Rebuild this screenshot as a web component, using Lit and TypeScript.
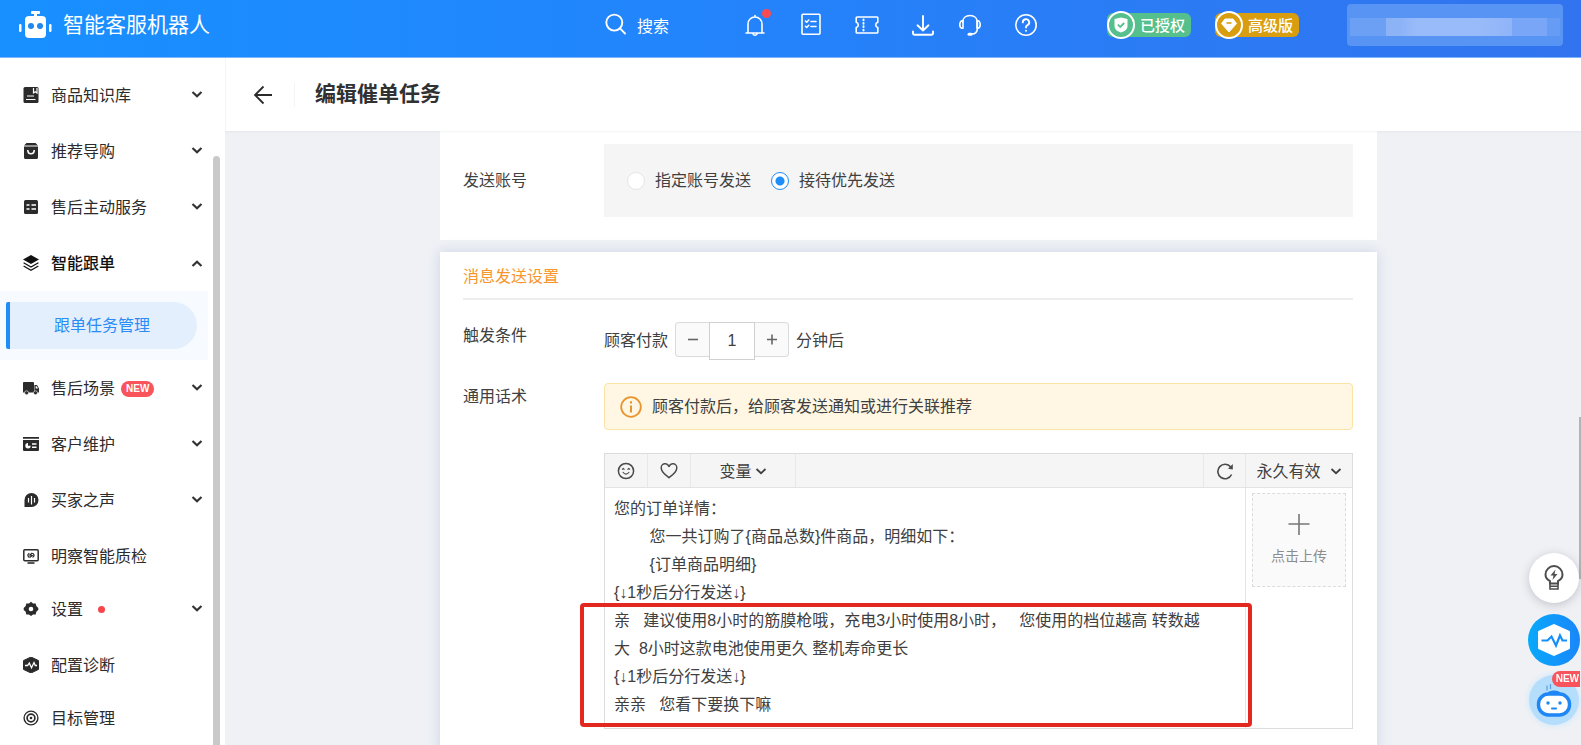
import { LitElement, html, css, svg, nothing } from "lit";
import { customElement } from "lit/decorators.js";
import { classMap } from "lit/directives/class-map.js";

const chevronDown = html`<svg class="chevron" viewBox="0 0 12 12" width="12" height="12" aria-hidden="true"><path d="M1.5 3 6 7.2 10.5 3" fill="none" stroke="currentColor" /></svg>`;
const chevronUp = html`<svg class="chevron" viewBox="0 0 12 12" width="12" height="12" aria-hidden="true"><path d="M1.5 9 6 4.8 10.5 9" fill="none" stroke="currentColor" /></svg>`;

/* Sidebar glyphs, all on a 16 x 16 grid. */
const menuIcons: Record<string, unknown> = {
  book: svg`<path d="M2 0h12q1.500 0 1.500 1.500v13q0 1.500-1.500 1.500H2q-1.500 0-1.500-1.500v-13Q.5 0 2 0z" fill="currentColor"/><path d="M10.500 1v5l1.800-1.200L14 6V1M4 9h7M3 12.500h9.500" fill="none" stroke="#fff" stroke-width="1.200"/>`,
  bag: svg`<path d="M1 3.500h14v11q0 1.500-1.500 1.500h-11Q1 16 1 14.500zM3.500 0h9L15 2.500H1z" fill="currentColor"/><path d="M4.800 7c0 5 6.400 5 6.400 0" fill="none" stroke="#fff" stroke-width="1.600"/>`,
  list: svg`<rect x="1" y="1" width="14" height="14" rx="1.500" fill="currentColor"/><path d="M3.500 6h3M8.500 6H13M3.500 10h3M8.500 10H13" stroke="#fff" stroke-width="1.400"/>`,
  layers: svg`<path d="M8 0l8 4.500L8 9 0 4.500z" fill="currentColor"/><path d="M.6 7.800 8 12l7.400-4.200M.6 11 8 15.200 15.400 11" fill="none" stroke="currentColor" stroke-width="1.300"/>`,
  truck: svg`<path d="M1 2h9q1 0 1 1v9.500H0V3q0-1 1-1zM11.400 5H14l2 3.500v4h-4.600z" fill="currentColor"/><path d="M12.600 6.200h1.200l1.200 2.300h-2.400z" fill="#fff"/><circle cx="3.600" cy="12.800" r="2" fill="currentColor" stroke="#fff" stroke-width=".6"/><circle cx="12.500" cy="12.800" r="2" fill="currentColor" stroke="#fff" stroke-width=".6"/>`,
  card: svg`<path d="M0 1h16v1.800H0zM0 4h16v10q0 1-1 1H1q-1 0-1-1z" fill="currentColor"/><path d="M5 7a2.700 2.700 0 1 0 2.700 2.700H5z" fill="#fff"/><path d="M9 8h4.500M9 11.200h4.500" stroke="#fff" stroke-width="1.400"/>`,
  voice: svg`<path d="M8.500 1a7 7 0 1 1 0 14H1.500V8a7 7 0 0 1 7-7z" fill="currentColor"/><path d="M5.500 6v4.500M8.500 4v8.500M11.500 6v4.500" stroke="#fff" stroke-width="1.200"/>`,
  monitor: svg`<rect x=".8" y="1.800" width="14.400" height="11" rx="1" fill="none" stroke="currentColor" stroke-width="1.500"/><path d="M4.500 15h7" stroke="currentColor" stroke-width="1.600"/><path d="M6.300 5.200Q3.300 7.200 6.300 9.400M9.600 5.200q3 2 0 4.200M9.300 5 6.800 7l2.400.6L6.600 9.600" fill="none" stroke="currentColor" stroke-width="1.200"/>`,
  gear: svg`<path d="M8 .8l2 1.700 2.700-.1.600 2.500L15.300 7v2l-2 1.800-.6 2.700-2.700-.1-2 1.700-2-1.700-2.700.1-.6-2.700L.7 9V7l2-2.100.6-2.500 2.700.1z" fill="currentColor"/><circle cx="8" cy="8" r="2.300" fill="#fff"/>`,
  pulse: svg`<path d="M8 0l7.500 3.600v8.800L8 16 .5 12.400V3.600z" fill="currentColor" stroke="currentColor" stroke-linejoin="round"/><path d="M2 8.500h2.600L6.300 6l2.200 4.800L11 5.500l1.300 3H14" fill="none" stroke="#fff" stroke-width="1.300"/>`,
  target: svg`<circle cx="8" cy="8" r="6.900" fill="none" stroke="currentColor" stroke-width="1.400"/><circle cx="8" cy="8" r="3.900" fill="none" stroke="currentColor" stroke-width="1.700"/><circle cx="8" cy="8" r="1.300" fill="currentColor"/>`,
};

interface MenuItem {
  icon: string;
  label: string;
  group: boolean;
  open?: boolean;
  badge?: string;
  dot?: boolean;
}

const menu: MenuItem[] = [
  { icon: "book", label: "商品知识库", group: true },
  { icon: "bag", label: "推荐导购", group: true },
  { icon: "list", label: "售后主动服务", group: true },
  { icon: "layers", label: "智能跟单", group: true, open: true },
  { icon: "truck", label: "售后场景", group: true, badge: "NEW" },
  { icon: "card", label: "客户维护", group: true },
  { icon: "voice", label: "买家之声", group: true },
  { icon: "monitor", label: "明察智能质检", group: false },
  { icon: "gear", label: "设置", group: true, dot: true },
  { icon: "pulse", label: "配置诊断", group: false },
  { icon: "target", label: "目标管理", group: false },
];

const message = [
  "您的订单详情：",
  "        您一共订购了{商品总数}件商品，明细如下：",
  "        {订单商品明细}",
  "{↓1秒后分行发送↓}",
  "亲   建议使用8小时的筋膜枪哦，充电3小时使用8小时，   您使用的档位越高 转数越大  8小时这款电池使用更久 整机寿命更长",
  "{↓1秒后分行发送↓}",
  "亲亲   您看下要换下嘛",
].join("\n");

const reset = css`
  * { box-sizing: border-box; }
  button, input, select, textarea { font: inherit; color: inherit; margin: 0; padding: 0; border: 0; background: none; border-radius: 0; outline: none; }
  button { cursor: pointer; }
  a { color: inherit; text-decoration: none; }
  svg { display: block; flex: none; }
`;

@customElement("top-bar")
export class TopBar extends LitElement {
  static styles = [reset, css`
    :host { display: flex; align-items: center; height: 58px; padding: 0 18px 8px; color: #fff; background: linear-gradient(90deg, #1890ff 0%, #2384fb 45%, #3273ef 100%); border-bottom: 1px solid #7db4fa; }
    .brand { display: flex; align-items: center; gap: 11px; font-size: 21px; line-height: 28px; white-space: nowrap; }
    .search { display: flex; align-items: center; gap: 9px; margin-left: auto; font-size: 16px; white-space: nowrap; }
    .tools { display: flex; gap: 32px; margin-left: 74px; }
    .pair { display: flex; gap: 23px; }
    .tool { position: relative; width: 24px; height: 24px; }
    .alert { position: absolute; top: -4px; right: -4px; width: 9px; height: 9px; border-radius: 50%; background: #fb4b50; }
    .tags { display: flex; gap: 24px; margin: 0 48px 0 69px; }
    .tag { display: flex; align-items: center; height: 24px; padding-right: 6px; gap: 5px; border-radius: 6px; font-size: 15px; font-weight: 500; white-space: nowrap; }
    .green { background: #55c08c; }
    .gold { background: #d99e10; }
    .seal { display: grid; place-items: center; width: 28px; height: 28px; border: 2px solid #fff; border-radius: 50%; background: inherit; }
    .account { width: 216px; height: 42px; display: grid; align-items: center; border-radius: 4px; background: #5794f3; }
    .mask { height: 18px; margin: 4px 3px 0; background: linear-gradient(90deg, #6ba0f5 0 17%, #8db3f7 17% 24%, #9abbf9 32% 60%, #8fb4f8 77%, #79a6f6 77% 94%, #669cf3 94%); }
  `];

  render() {
    const s = (body: unknown) => html`<svg viewBox="0 0 24 24" width="24" height="24" fill="none" stroke="#fff" stroke-width="1.6" stroke-linecap="round" stroke-linejoin="round" aria-hidden="true">${body}</svg>`;
    return html`
      <a class="brand" href="#">
        <svg viewBox="0 0 34 28" width="34" height="28" fill="#fff" aria-hidden="true">
          <rect x="13" y="0" width="9" height="3" rx="1" /><rect x="16" y="2" width="3" height="4" />
          <rect x="7" y="5" width="21" height="22" rx="4" />
          <rect x="1" y="13" width="2.500" height="8" rx="1.200" /><rect x="31" y="13" width="2.500" height="8" rx="1.200" />
          <circle cx="13" cy="15" r="3" fill="#1e88ee" /><circle cx="22" cy="15" r="3" fill="#1e88ee" />
        </svg>
        <span>智能客服机器人</span>
      </a>
      <button class="search">
        <svg viewBox="0 0 24 24" width="24" height="24" fill="none" stroke="#fff" stroke-width="1.9" stroke-linecap="round" aria-hidden="true"><circle cx="10.300" cy="9.600" r="8" /><path d="M16 15.400 21 20.500" /></svg>
        <span>搜索</span>
      </button>
      <nav class="tools">
        <button class="tool" aria-label="通知">${s(svg`<path d="M3 20h18M5 20v-9a7 7 0 0 1 14 0v9M12 2.500V4M10 21a2.200 2.200 0 0 0 4 0"/>`)}<span class="alert"></span></button>
        <button class="tool" aria-label="任务">${s(svg`<rect x="3" y="1.200" width="18" height="20" rx="1"/><path d="M6.500 8l1.200 1.200L9.800 7M6.500 13.300l1.200 1.200 2.100-2.200M12 8.500h5M12 13.500h5"/>`)}</button>
        <button class="tool" aria-label="卡券">${s(svg`<path d="M2 4h20q.8 0 .8.800v4.400a2.800 2.800 0 0 0 0 5.400v4.600q0 .8-.8.800H2q-.8 0-.8-.8v-4.600a2.800 2.800 0 0 0 0-5.400V4.800Q1.200 4 2 4z"/><path d="M8.500 6.500v.8M8.500 10v.8M8.500 13.300v.8M8.500 16.700v.8" stroke-width="2"/>`)}</button>
        <span class="pair">
          <button class="tool" aria-label="下载">${s(svg`<path d="M12 3v14.500M6.500 12.300l5.500 5.200 5.500-5.200M2 18.500V20q0 1.800 1.800 1.800h16.400Q22 21.800 22 20v-1.500" stroke-width="1.900"/>`)}</button>
          <button class="tool" aria-label="客服">${s(svg`<path d="M4.600 9.500C4.600 5 7.900 2.500 12 2.500S19.400 5 19.400 9.500v5.700c0 3.700-2.500 5.800-5.800 5.800"/><path d="M5 7.800h-.8a2.400 3.700 0 0 0 0 7.400H5zM19 7.800h.8a2.400 3.700 0 0 1 0 7.400H19z"/><path d="M11 21.200h2" stroke-width="3"/>`)}</button>
        </span>
        <button class="tool" aria-label="帮助">${s(svg`<circle cx="12" cy="12" r="10.200"/><path d="M8.800 9.400a3.200 3.200 0 1 1 4.700 2.800c-1.100.6-1.500 1.100-1.500 2.200M12 17.600v.2" stroke-width="1.900"/>`)}</button>
      </nav>
      <div class="tags">
        <span class="tag green"><span class="seal"><svg viewBox="0 0 16 16" width="16" height="16" aria-hidden="true"><path d="M8 .5 14.500 2v7c0 3.500-3 5.500-6.500 6.500C4.500 14.500 1.500 12.500 1.500 9V2z" fill="#fff"/><path d="M4.800 7.500l2.400 2.500 4-4" fill="none" stroke="#55c08c" stroke-width="1.800"/></svg></span>已授权</span>
        <span class="tag gold"><span class="seal"><svg viewBox="0 0 16 16" width="16" height="16" aria-hidden="true"><path d="M4 2h8l3.500 4.500L8 15 .5 6.500z" fill="#fff" stroke="#fff" stroke-linejoin="round"/><path d="M5.500 6h5" stroke="#d99e10" stroke-width="1.600"/></svg></span>高级版</span>
      </div>
      <div class="account"><div class="mask"></div></div>
    `;
  }
}

@customElement("side-menu")
export class SideMenu extends LitElement {
  static styles = [reset, css`
    :host { position: relative; display: block; padding: 9px 17px 0 0; background: #fff; overflow: hidden; font-size: 16px; line-height: 24px; color: #2b2b2b; }
    .item { display: flex; align-items: center; width: 100%; padding: 15px 5px 15px 23px; text-align: left; white-space: nowrap; }
    .leaf { padding-bottom: 12px; }
    .open { font-weight: 500; color: #111; }
    .label { margin-left: 12px; padding-top: 2px; }
    .chevron { margin-left: auto; color: #333; stroke-width: 2.2; }
    .badge { margin: 2px 0 0 6px; padding: 0 5px; border-radius: 8px; background: #f9535b; color: #fff; font-size: 10px; line-height: 16px; font-weight: 700; }
    .dot { width: 7px; height: 7px; margin-left: 15px; border-radius: 50%; background: #f5454d; }
    .sub { padding: 11px 11px 11px 6px; background: #f7faff; }
    .current { display: block; padding: 12px 0 11px 44px; border-left: 4px solid #1e8df8; border-radius: 2px 24px 24px 2px; background: #e3effd; color: #2b8cf5; }
    .thumb { position: absolute; top: 98px; bottom: 0; right: 5px; width: 7px; border-radius: 4px 4px 0 0; background: #c9c9c9; }
  `];

  render() {
    return html`
      ${menu.map((m) => html`
        <button class=${classMap({ item: true, leaf: !m.group, open: !!m.open })}>
          <svg viewBox="0 0 16 16" width="16" height="16" aria-hidden="true">${menuIcons[m.icon]}</svg>
          <span class="label">${m.label}</span>
          ${m.badge ? html`<span class="badge">${m.badge}</span>` : nothing}
          ${m.dot ? html`<span class="dot"></span>` : nothing}
          ${m.group ? (m.open ? chevronUp : chevronDown) : nothing}
        </button>
        ${m.open ? html`<div class="sub"><a class="current" href="#">跟单任务管理</a></div>` : nothing}
      `)}
      <div class="thumb"></div>
    `;
  }
}

@customElement("task-editor")
export class TaskEditor extends LitElement {
  static styles = [reset, css`
    :host { display: flex; flex-direction: column; min-width: 0; overflow: hidden; font-size: 16px; line-height: 24px; color: #404040; background: #eff1f5; }
    .title-bar { display: flex; align-items: center; flex: none; height: 73px; padding-left: 27px; border-left: 1px solid #f4f4f4; background: #fff; box-shadow: 0 1px 2px rgba(60, 70, 90, 0.06); z-index: 1; }
    .divider { width: 1px; height: 24px; margin: 0 20px 0 21px; background: #f4f4f4; }
    h1 { margin: 0 0 1px; font-size: 21px; line-height: 28px; font-weight: 700; color: #303133; }
    .scroll { flex: 1; display: flex; flex-direction: column; gap: 12px; min-height: 0; padding: 0 24px 0 35px; overflow: hidden; }
    .card { width: 100%; max-width: 937px; margin: 0 auto; padding: 0 24px 0 23px; background: #fff; }
    .account-card { padding-top: 13px; padding-bottom: 23px; }
    .message-card { flex: 1 0 auto; padding-bottom: 24px; box-shadow: 0 0 12px rgba(150, 170, 205, 0.4); }
    .row { display: grid; grid-template-columns: 141px minmax(0, 1fr); }
    .radios { display: flex; align-items: center; height: 73px; gap: 20px; padding-left: 23px; background: #f5f5f5; }
    .account-card .name { align-self: center; }
    .message-card .name { padding-top: 2px; }
    .choice { display: flex; align-items: center; gap: 10px; white-space: nowrap; }
    input[type="radio"] { appearance: none; width: 18px; height: 18px; border: 1px solid #e6e6e6; border-radius: 50%; background: #fff; }
    input[type="radio"]:checked { border-color: #1e8df8; background: radial-gradient(circle, #1e8df8 0 4px, #fff 5px); }
    h2 { margin: 0 0 22px; padding: 13px 0 9px; border-bottom: 2px solid #ededed; font-size: 16px; line-height: 24px; font-weight: 400; color: #f7962d; }
    .trigger { display: flex; align-items: center; gap: 7px; }
    .stepper { display: flex; align-items: flex-start; }
    .step { width: 34px; height: 35px; display: grid; place-items: center; border: 1px solid #dadada; background: #fafafa; color: #666; }
    .minus { border-radius: 4px 0 0 4px; border-right: 0; }
    .plus { border-radius: 0 4px 4px 0; border-left: 0; }
    .count { width: 46px; height: 38px; border: 1px solid #d0d0d0; background: #fff; text-align: center; }
    .script-row { margin-top: 23px; }
    .hint { display: flex; align-items: center; gap: 10px; height: 47px; margin-bottom: 23px; padding-left: 15px; border: 1px solid #fae3a4; border-radius: 4px; background: #fff7e3; }
    .editor { position: relative; display: grid; grid-template-columns: minmax(0, 1fr) 106px; grid-template-rows: 34px 240px; border: 1px solid #dcdcdc; }
    .toolbar, .expiry { display: flex; align-items: stretch; background: #f5f5f5; border-bottom: 1px solid #e3e3e3; }
    .cell { display: flex; align-items: center; justify-content: center; width: 43px; border-right: 1px solid #e8e8e8; }
    .variable { width: 105px; gap: 2px; }
    .refresh { margin-left: auto; border-left: 1px solid #e8e8e8; }
    .expiry { align-items: center; justify-content: center; gap: 8px; }
    .chevron { stroke-width: 1.8; margin-top: 2px; }
    select { appearance: none; height: 26px; padding-top: 2px; line-height: 24px; }
    textarea { display: block; width: 100%; height: 240px; padding: 7px 30px 0 9px; border-right: 1px solid #e3e3e3; line-height: 28px; resize: none; overflow: hidden; }
    .upload { display: flex; flex-direction: column; align-items: center; justify-content: center; gap: 9px; width: 94px; height: 94px; margin: 5px 6px; border: 1px dashed #dcdcdc; background: #fafafa; color: #8c8c8c; font-size: 14px; line-height: 22px; }
    .marker { position: absolute; top: 149px; bottom: 1px; left: -25px; right: 100px; border: 4px solid #e3281f; border-radius: 4px; pointer-events: none; }
  `];

  render() {
    return html`
      <header class="title-bar">
        <button aria-label="返回"><svg viewBox="0 0 20 20" width="20" height="20" fill="none" stroke="#2b2b2b" stroke-width="1.8" aria-hidden="true"><path d="M10.500 1.500 2 10l8.500 8.500M2 10h17" /></svg></button>
        <span class="divider"></span>
        <h1>编辑催单任务</h1>
      </header>
      <div class="scroll">
        <section class="card account-card">
          <div class="row">
            <span class="name" id="account">发送账号</span>
            <div class="radios" role="radiogroup" aria-labelledby="account">
              <label class="choice"><input type="radio" name="account" />指定账号发送</label>
              <label class="choice"><input type="radio" name="account" checked />接待优先发送</label>
            </div>
          </div>
        </section>
        <section class="card message-card">
          <h2>消息发送设置</h2>
          <div class="row">
            <label class="name" for="minutes">触发条件</label>
            <div class="trigger">
              <span>顾客付款</span>
              <div class="stepper">
                <button class="step minus" aria-label="减少"><svg viewBox="0 0 12 12" width="12" height="12" stroke="currentColor" stroke-width="1.6"><path d="M1 5.500h10" /></svg></button>
                <input class="count" id="minutes" type="text" value="1" />
                <button class="step plus" aria-label="增加"><svg viewBox="0 0 12 12" width="12" height="12" stroke="currentColor" stroke-width="1.6"><path d="M1 5.500h10M6 .5v10" /></svg></button>
              </div>
              <span>分钟后</span>
            </div>
          </div>
          <div class="row script-row">
            <label class="name" for="script">通用话术</label>
            <div>
              <div class="hint">
                <svg viewBox="0 0 22 22" width="22" height="22" fill="none" stroke="#e8952f" stroke-width="1.800" aria-hidden="true"><circle cx="11" cy="11" r="9.800" /><path d="M11 9.500v7M11 5.300v2.200" stroke-width="2" /></svg>
                <span>顾客付款后，给顾客发送通知或进行关联推荐</span>
              </div>
              <div class="editor">
                <div class="toolbar">
                  <button class="cell" aria-label="表情"><svg viewBox="0 0 18 18" width="18" height="18" fill="none" stroke="#4a4a4a" stroke-width="1.5" aria-hidden="true"><circle cx="9" cy="9" r="7.600" /><path d="M5 7.600l1.300-1 1.200 1M10.500 7.600l1.200-1 1.300 1M5.800 10q3.200 4.300 6.400 0" stroke-width="1.200" /></svg></button>
                  <button class="cell" aria-label="收藏"><svg viewBox="0 0 18 18" width="18" height="18" fill="none" stroke="#4a4a4a" stroke-width="1.500" aria-hidden="true"><path d="M9 15.700C5.500 13 1.300 10 1.300 6.500a3.900 3.900 0 0 1 7.700-1.700 3.900 3.900 0 0 1 7.700 1.700C16.700 10 12.500 13 9 15.700z" /></svg></button>
                  <div class="cell variable"><select aria-label="变量"><option>变量</option></select>${chevronDown}</div>
                  <button class="cell refresh" aria-label="刷新"><svg viewBox="0 0 18 18" width="18" height="18" fill="none" stroke="#4a4a4a" stroke-width="1.600" aria-hidden="true"><path d="M15.600 12.500A7.200 7.200 0 1 1 14.700 5" /><path d="M16.800 2v5.500l-4.800-.8z" fill="#4a4a4a" stroke="none" /></svg></button>
                </div>
                <div class="expiry"><select aria-label="有效期"><option>永久有效</option></select>${chevronDown}</div>
                <textarea id="script" spellcheck="false" .value=${message}></textarea>
                <button class="upload"><svg viewBox="0 0 22 22" width="22" height="22" stroke="#777" stroke-width="1.600" aria-hidden="true"><path d="M0.500 10h21M11 0v21" /></svg>点击上传</button>
                <div class="marker"></div>
              </div>
            </div>
          </div>
        </section>
      </div>
    `;
  }
}

@customElement("float-tools")
export class FloatTools extends LitElement {
  static styles = [reset, css`
    :host { position: fixed; right: 1px; bottom: 20px; display: flex; flex-direction: column; align-items: center; gap: 11px; width: 52px; }
    .tip { display: grid; place-items: center; width: 50px; height: 50px; border-radius: 50%; background: #fff; box-shadow: 0 2px 10px rgba(90, 90, 100, 0.3); }
    .check { display: grid; place-items: center; width: 52px; height: 52px; border-radius: 50%; background: linear-gradient(90deg, #08a9fb, #1a86fa); }
    .bot { position: relative; display: grid; place-items: center; width: 50px; height: 50px; margin-top: -2px; border-radius: 50%; background: #b5ddfc; box-shadow: 0 0 6px #c9e6fc; }
    .new { position: absolute; top: -4px; right: -1px; padding: 0 1px 0 4px; border-radius: 8px 0 0 8px; background: #f9535b; color: #fff; font-size: 10px; line-height: 16px; font-weight: 700; }
  `];

  render() {
    return html`
      <button class="tip" aria-label="提示"><svg viewBox="0 0 20 26" width="20" height="26" fill="none" stroke="#4d4d4d" stroke-width="2" aria-hidden="true"><path d="M6 18.500v-2.300C3 14.700 1.500 12.500 1.500 9.600a8.500 8.500 0 0 1 17 0c0 2.900-1.500 5.100-4.500 6.600v2.300z" /><path d="M6 19v5h8v-5M6 21.300h8" stroke-width="1.600" /><path d="M11.500 4.500 6.500 10.500h3l-1 4.500 5-6h-3z" fill="#4d4d4d" stroke="none" /></svg></button>
      <button class="check" aria-label="诊断"><svg viewBox="0 0 34 34" width="34" height="34" aria-hidden="true"><path d="M17 2.500 31.500 9v16L17 31.500 2.500 25V9z" fill="#fff" stroke="#fff" stroke-width="3" stroke-linejoin="round" /><path d="M4.500 17.500h6l4-4 4.500 9 4-10 2.500 5H30" fill="none" stroke="#158ffa" stroke-width="2.200" /></svg></button>
      <button class="bot" aria-label="机器人"><svg viewBox="0 0 36 36" width="36" height="36" aria-hidden="true"><path d="M11 3.500v5M14.500 2v5" stroke="#5a9fe0" stroke-width="1.200" /><rect x="2.500" y="12" width="31" height="21" rx="10" fill="#fff" stroke="#1e86f5" stroke-width="3.400" /><path d="M13 9.500q5-2 10 0l2 2H11z" fill="#1e86f5" /><circle cx="12" cy="21" r="1.700" fill="#1e86f5" /><circle cx="24" cy="21" r="1.700" fill="#1e86f5" /><path d="M16 26.500h4" stroke="#1e86f5" stroke-width="2" stroke-linecap="round" /></svg><span class="new">NEW</span></button>
    `;
  }
}

@customElement("app-root")
export class AppRoot extends LitElement {
  static styles = [reset, css`
    :host { display: grid; grid-template-rows: auto minmax(0, 1fr); height: 100vh; overflow: hidden; font-family: "Liberation Sans", "Noto Sans CJK SC", sans-serif; }
    .body { display: grid; grid-template-columns: 225px minmax(0, 1fr); min-height: 0; }
    .page-thumb { position: fixed; top: 56%; right: 0; width: 2px; height: 162px; background: #b4b4b8; }
  `];

  render() {
    return html`
      <top-bar></top-bar>
      <div class="body">
        <side-menu></side-menu>
        <task-editor></task-editor>
      </div>
      <div class="page-thumb"></div>
      <float-tools></float-tools>
    `;
  }
}
